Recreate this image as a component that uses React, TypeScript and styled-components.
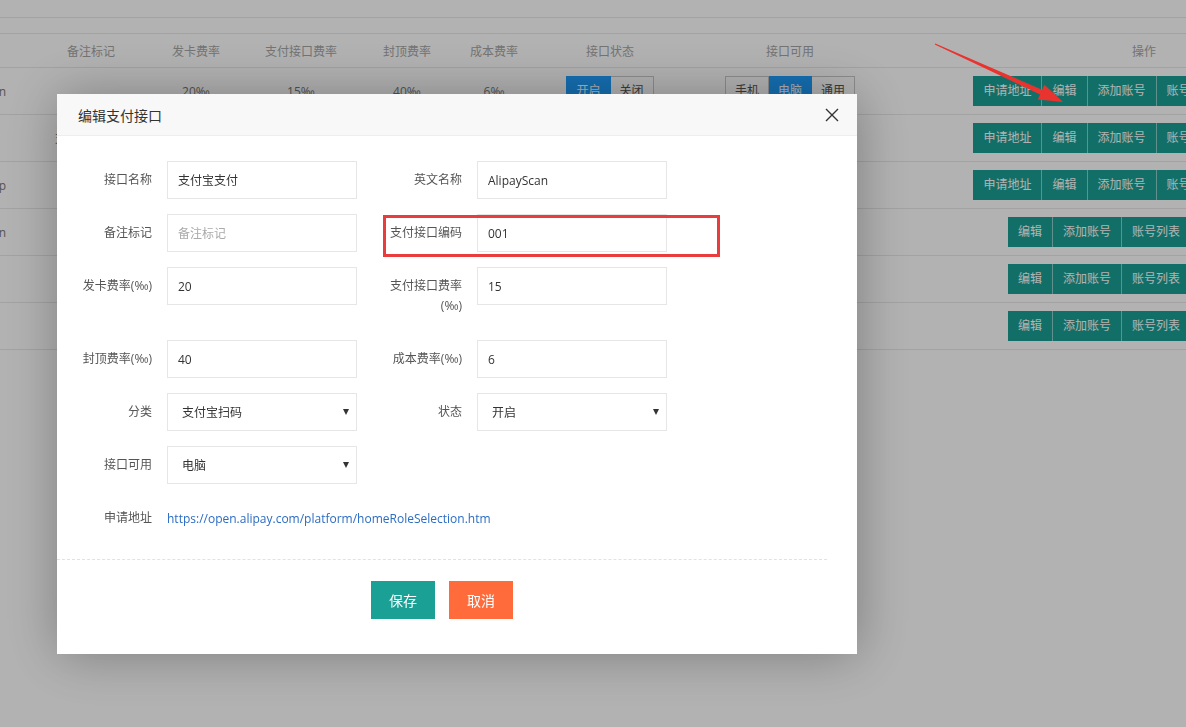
import React from 'react';
import styled, { createGlobalStyle } from 'styled-components';

const GlobalStyle = createGlobalStyle`
  html, body {
    margin: 0;
    padding: 0;
    background: #fff;
    overflow: hidden;
  }
  body {
    font-family: "Open Sans", "Noto Sans CJK SC", sans-serif;
    font-size: 12px;
    color: #333;
  }
  * {
    box-sizing: border-box;
  }
`;

const Page = styled.div`
  width: 1186px;
  height: 727px;
  overflow: hidden;
`;

const Strip = styled.div<{ $h: number }>`
  height: ${(p) => p.$h}px;
  width: 1312px;
  border-bottom: 1px solid #e8e8e8;
`;

const Row = styled.div<{ $head?: boolean }>`
  display: grid;
  grid-template-columns: 40px 102px 108px 102px 110px 64px 168px 192px 426px;
  width: 1312px;
  height: ${(p) => (p.$head ? 34 : 47)}px;
  border-bottom: 1px solid #e8e8e8;
  color: ${(p) => (p.$head ? '#a6a6a6' : '#777')};
`;

const Cell = styled.div<{ $tail?: boolean; $shift?: number }>`
  display: flex;
  align-items: center;
  justify-content: ${(p) => (p.$tail ? 'flex-end' : 'center')};
  padding-right: ${(p) => (p.$tail ? 34 : 0)}px;
  padding-left: ${(p) => p.$shift || 0}px;
  white-space: nowrap;
  overflow: hidden;
`;

const Group = styled.div`
  display: flex;
`;

const ToggleBtn = styled.span<{ $on?: boolean }>`
  height: 30px;
  line-height: 28px;
  padding: 0 9px;
  border: 1px solid ${(p) => (p.$on ? '#1e9fff' : '#c9c9c9')};
  background: ${(p) => (p.$on ? '#1e9fff' : '#fff')};
  color: ${(p) => (p.$on ? '#fff' : '#555')};
  & + & {
    border-left: none;
  }
`;

const OpBtn = styled.span`
  height: 30px;
  line-height: 30px;
  padding: 0 10px;
  background: #1aa094;
  color: #fff;
  & + & {
    border-left: 1px solid rgba(255, 255, 255, 0.5);
  }
`;

const Shade = styled.div`
  position: fixed;
  inset: 0;
  background: rgba(0, 0, 0, 0.3);
`;

const Dialog = styled.div`
  position: fixed;
  left: 57px;
  top: 94px;
  width: 800px;
  height: 560px;
  background: #fff;
  box-shadow: 1px 1px 50px rgba(0, 0, 0, 0.3);
`;

const DialogHead = styled.div`
  height: 42px;
  display: flex;
  align-items: center;
  justify-content: space-between;
  padding: 0 18px 0 21px;
  background: #f8f8f8;
  border-bottom: 1px solid #eee;
  font-size: 14px;
  color: #333;
`;

const Close = styled.svg`
  width: 14px;
  height: 14px;
`;

const Form = styled.div`
  width: 770px;
  padding-top: 25px;
`;

const FormRow = styled.div`
  display: flex;
  margin-bottom: 15px;
`;

const Inline = styled.div`
  display: flex;
  align-items: flex-start;
  margin-right: 10px;
`;

const Label = styled.label`
  width: 110px;
  padding: 9px 15px;
  line-height: 20px;
  text-align: right;
  color: #555;
  font-size: 12px;
`;

const Field = styled.div<{ $empty?: boolean; $select?: boolean }>`
  width: 190px;
  height: 38px;
  border: 1px solid #e6e6e6;
  display: flex;
  align-items: center;
  justify-content: space-between;
  padding: ${(p) => (p.$select ? '0 7px 0 14px' : '0 10px')};
  color: ${(p) => (p.$empty ? '#aaa' : '#333')};
  font-size: 12px;
`;

const Caret = styled.span`
  width: 0;
  height: 0;
  border-left: 3.5px solid transparent;
  border-right: 3.5px solid transparent;
  border-top: 6px solid #333;
`;

const Link = styled.a`
  padding: 10px 0 8px;
  line-height: 20px;
  color: #2b6cc4;
  text-decoration: none;
  font-size: 12px;
`;

const Footer = styled.div`
  margin-top: 22px;
  border-top: 1px dashed #e2e2e2;
  padding-top: 21px;
  display: flex;
  justify-content: center;
  gap: 14px;
`;

const Btn = styled.button<{ $bg: string }>`
  height: 38px;
  padding: 0 18px;
  border: none;
  background: ${(p) => p.$bg};
  color: #fff;
  font-family: inherit;
  font-size: 14px;
`;

const RedBox = styled.div`
  position: absolute;
  left: 326px;
  top: 121px;
  width: 337px;
  height: 42px;
  border: 3px solid #ea3c3c;
`;

const Arrow = styled.svg`
  position: fixed;
  left: 920px;
  top: 35px;
  width: 160px;
  height: 80px;
`;

type TableRow = {
  name: string;
  remark: string;
  rates: string[];
  avail?: number;
  apply: boolean;
};

const rates = ['20‰', '15‰', '40‰', '6‰'];

const rows: TableRow[] = [
  { name: 'AlipayScan', remark: '', rates, avail: 1, apply: true },
  { name: '', remark: '支付宝扫码付', rates, avail: -1, apply: true },
  { name: 'AlipayWap', remark: '', rates, apply: true },
  { name: 'WeixinScan', remark: '', rates, avail: -1, apply: false },
  { name: '微信扫码，', remark: '', rates, avail: 2, apply: false },
  { name: 'QQ钱包、', remark: '', rates, apply: false },
];

const heads = ['', '备注标记', '发卡费率', '支付接口费率', '封顶费率', '成本费率', '接口状态', '接口可用'];

const App = () => {
  return (
    <Page>
      <GlobalStyle />
      <Strip $h={18} />
      <Strip $h={16} />
      <Row $head>
        {heads.map((h, i) => (
          <Cell key={i}>{h}</Cell>
        ))}
        <Cell $shift={90}>操作</Cell>
      </Row>
      {rows.map((r, i) => (
        <Row key={i}>
          <Cell $tail>{r.name}</Cell>
          <Cell>{r.remark}</Cell>
          {r.rates.map((v, j) => (
            <Cell key={j}>{i === 0 ? v : ''}</Cell>
          ))}
          <Cell>
            <Group>
              <ToggleBtn $on>开启</ToggleBtn>
              <ToggleBtn>关闭</ToggleBtn>
            </Group>
          </Cell>
          <Cell>
            {r.avail !== undefined && (
              <Group>
                {['手机', '电脑', '通用'].map((t, k) => (
                  <ToggleBtn key={t} $on={r.avail === k}>
                    {t}
                  </ToggleBtn>
                ))}
              </Group>
            )}
          </Cell>
          <Cell>
            <Group>
              {r.apply && <OpBtn>申请地址</OpBtn>}
              <OpBtn>编辑</OpBtn>
              <OpBtn>添加账号</OpBtn>
              <OpBtn>账号列表</OpBtn>
            </Group>
          </Cell>
        </Row>
      ))}

      <Shade />

      <Dialog>
        <DialogHead>
          <span>编辑支付接口</span>
          <Close viewBox="0 0 14 14">
            <path d="M1 1 L13 13 M13 1 L1 13" stroke="#333" strokeWidth="1.4" />
          </Close>
        </DialogHead>
        <Form>
          <FormRow>
            <Inline>
              <Label>接口名称</Label>
              <Field>支付宝支付</Field>
            </Inline>
            <Inline>
              <Label>英文名称</Label>
              <Field>AlipayScan</Field>
            </Inline>
          </FormRow>
          <FormRow>
            <Inline>
              <Label>备注标记</Label>
              <Field $empty>备注标记</Field>
            </Inline>
            <Inline>
              <Label>支付接口编码</Label>
              <Field>001</Field>
            </Inline>
          </FormRow>
          <FormRow>
            <Inline>
              <Label>发卡费率(‰)</Label>
              <Field>20</Field>
            </Inline>
            <Inline>
              <Label>支付接口费率(‰)</Label>
              <Field>15</Field>
            </Inline>
          </FormRow>
          <FormRow>
            <Inline>
              <Label>封顶费率(‰)</Label>
              <Field>40</Field>
            </Inline>
            <Inline>
              <Label>成本费率(‰)</Label>
              <Field>6</Field>
            </Inline>
          </FormRow>
          <FormRow>
            <Inline>
              <Label>分类</Label>
              <Field $select>
                支付宝扫码
                <Caret />
              </Field>
            </Inline>
            <Inline>
              <Label>状态</Label>
              <Field $select>
                开启
                <Caret />
              </Field>
            </Inline>
          </FormRow>
          <FormRow>
            <Inline>
              <Label>接口可用</Label>
              <Field $select>
                电脑
                <Caret />
              </Field>
            </Inline>
          </FormRow>
          <FormRow>
            <Inline>
              <Label>申请地址</Label>
              <Link href="#">https://open.alipay.com/platform/homeRoleSelection.htm</Link>
            </Inline>
          </FormRow>
          <Footer>
            <Btn $bg="#1aa094">保存</Btn>
            <Btn $bg="#ff6b3b">取消</Btn>
          </Footer>
        </Form>
        <RedBox />
      </Dialog>

      <Arrow viewBox="0 0 160 80">
        <polygon
          points="14.75,9.55 120.1,59.4 117.8,64.4 143,67 124.4,49.8 122.1,54.8 15.25,8.45"
          fill="#e8332f"
        />
      </Arrow>
    </Page>
  );
};

export default App;
